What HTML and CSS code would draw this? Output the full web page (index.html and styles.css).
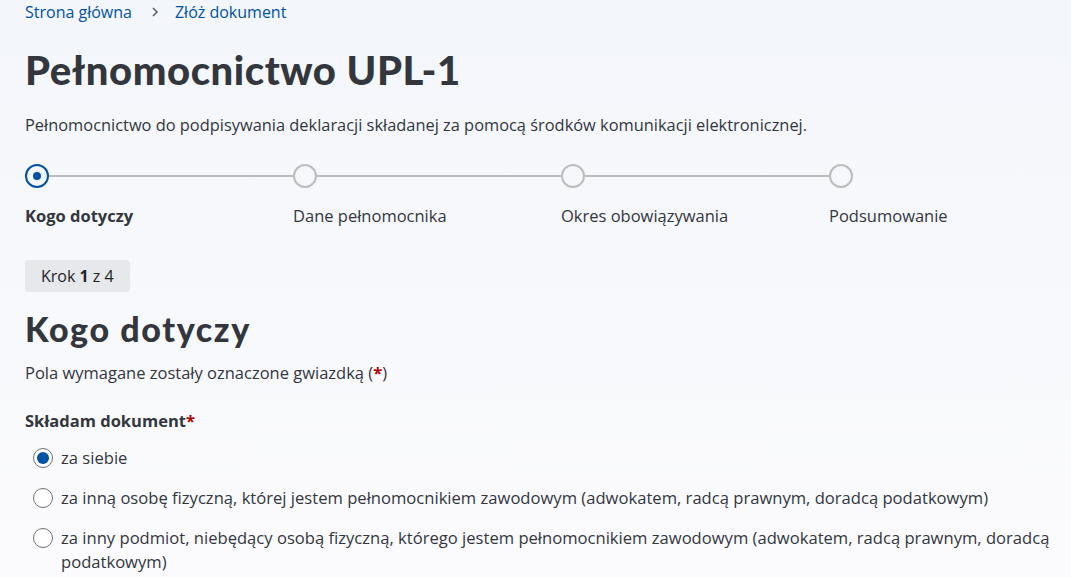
FILE: index.html
```html
<!DOCTYPE html>
<html lang="pl">
<head>
<meta charset="utf-8">
<title>Pełnomocnictwo UPL-1</title>
<link rel="stylesheet" href="styles.css">
</head>
<body>
<main class="page">
  <nav class="breadcrumb">
    <a href="#" class="crumb">Strona główna</a>
    <svg class="chev" width="10" height="12" viewBox="0 0 10 12"><path d="M3 2l4 4-4 4" fill="none" stroke="#5f6368" stroke-width="1.6"/></svg>
    <a href="#" class="crumb">Złóż dokument</a>
  </nav>
  <h1 class="title">Pełnomocnictwo UPL-1</h1>
  <p class="lead">Pełnomocnictwo do podpisywania deklaracji składanej za pomocą środków komunikacji elektronicznej.</p>

  <ol class="stepper">
    <li class="step active"><span class="dot"></span><span class="label">Kogo dotyczy</span></li>
    <li class="step"><span class="dot"></span><span class="label">Dane pełnomocnika</span></li>
    <li class="step"><span class="dot"></span><span class="label">Okres obowiązywania</span></li>
    <li class="step last"><span class="dot"></span><span class="label">Podsumowanie</span></li>
  </ol>

  <div class="badge">Krok <b>1</b> z 4</div>

  <h2 class="subtitle">Kogo dotyczy</h2>
  <p class="note">Pola wymagane zostały oznaczone gwiazdką (<span class="req">*</span>)</p>

  <fieldset class="group">
    <legend class="legend">Składam dokument<span class="req">*</span></legend>
    <label class="radio"><span class="mark checked"></span><span>za siebie</span></label>
    <label class="radio"><span class="mark"></span><span>za inną osobę fizyczną, której jestem pełnomocnikiem zawodowym (adwokatem, radcą prawnym, doradcą podatkowym)</span></label>
    <label class="radio"><span class="mark"></span><span>za inny podmiot, niebędący osobą fizyczną, którego jestem pełnomocnikiem zawodowym (adwokatem, radcą prawnym, doradcą podatkowym)</span></label>
  </fieldset>
</main>
</body>
</html>
```
FILE: styles.css
```css
* { box-sizing: border-box; }
html, body { margin: 0; height: 100%; }
body {
  background: linear-gradient(180deg, #f3f6fb 0%, #f8f9fc 60%, #fbfbfd 100%);
  font-family: "Open Sans", "Noto Sans", sans-serif;
  color: #33373d;
  font-size: 16.5px;
  line-height: 24px;
}
.page { padding: 0 16px 0 25px; }
.breadcrumb { display: flex; align-items: center; height: 24px; }
.crumb { color: #0052a5; text-decoration: none; font-size: 16px; }
.chev { margin: 0 15px 0 18px; }
.title {
  margin: 22px 0 0;
  font-family: Lato, "Open Sans", sans-serif;
  font-weight: 900;
  font-size: 40px;
  line-height: 48px;
  letter-spacing: 0.55px;
  color: #33373d;
}
.lead { margin: 19px 0 0; font-size: 16.4px; }
.stepper {
  list-style: none; margin: 27px 0 0; padding: 0;
  display: grid; grid-template-columns: 268px 268px 268px auto;
}
.step { display: flex; flex-direction: column; position: relative; }
.step::before {
  content: ""; position: absolute; left: 24px; right: 0; top: 11px;
  height: 2px; background: #bdbdbd;
}
.step.last::before { display: none; }
.dot {
  width: 24px; height: 24px; border-radius: 50%;
  border: 2px solid #bdbdbd; background: #f5f7fb;
  display: flex; align-items: center; justify-content: center;
}
.active .dot { border-color: #0052a5; }
.active .dot::after { content: ""; width: 8px; height: 8px; border-radius: 50%; background: #0052a5; }
.label { margin-top: 16px; }
.active .label { font-weight: 700; }
.badge {
  display: inline-block; margin-top: 32px;
  background: #e6e8eb; border-radius: 3px;
  padding: 4px 16px; height: 32px; font-size: 16px; line-height: 24px; color: #1f2328;
}
.subtitle {
  margin: 17px 0 0;
  font-family: Lato, "Open Sans", sans-serif; font-weight: 900;
  font-size: 34px; line-height: 40px; letter-spacing: 1.6px; color: #33373d;
}
.note { margin: 12px 0 0; }
.req { color: #b00000; font-weight: 700; }
.group { border: 0; margin: 24px 0 0; padding: 0; }
.legend { padding: 0; font-weight: 700; margin-bottom: 13px; }
.radio { display: flex; align-items: flex-start; gap: 8px; margin: 0 0 16px 8px; font-size: 16.6px; }
.mark {
  flex: none; width: 20px; height: 20px; border-radius: 50%;
  border: 1px solid #6f6f6f; background: #fff; margin-top: 2px;
  display: flex; align-items: center; justify-content: center;
}
.mark.checked::after { content: ""; width: 12px; height: 12px; border-radius: 50%; background: #0052a5; }
```
